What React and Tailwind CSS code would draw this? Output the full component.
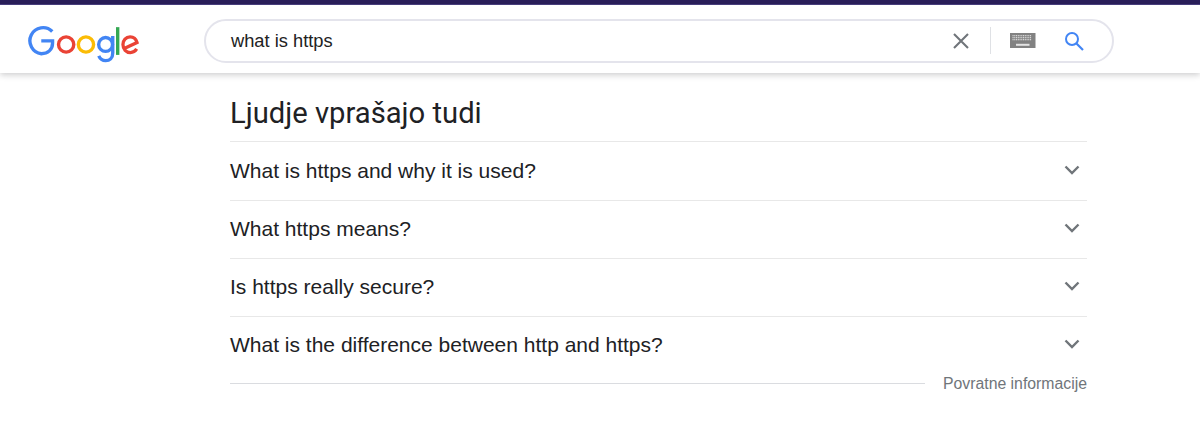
import React from "react";

function GoogleLogo() {
  return (
    <svg width="113" height="41" viewBox="0 0 113 41" fill="none" aria-label="Google">
      <path transform="translate(0 1.2)" d="M25.5 7.2 A13.2 13.2 0 1 0 14.5 29.6 C21 29.6 25.8 25.6 25.8 18.8 L25.8 16.6 L14.4 16.6" stroke="#4285f4" strokeWidth="3.4" />
      <circle cx="39.5" cy="21.5" r="7.7" stroke="#ea4335" strokeWidth="3.4" />
      <circle cx="59.5" cy="21.5" r="7.7" stroke="#fbbc05" strokeWidth="3.4" />
      <circle cx="79.3" cy="21.5" r="7" stroke="#4285f4" strokeWidth="3.4" />
      <path d="M86.5 13 L86.5 30 C86.5 35.5 83.3 37.8 79.4 37.8 C76 37.8 73.6 35.8 72.4 33" stroke="#4285f4" strokeWidth="3.4" />
      <path d="M91.5 4 V32" stroke="#34a853" strokeWidth="3.4" />
      <path d="M97 26 L111 19.5 C110 15.8 107.5 13.8 104 13.8 C99.8 13.8 96.8 17.2 96.8 21.6 C96.8 26.2 100 29.6 104.3 29.6 C107.2 29.6 109.3 28.2 110.7 26" stroke="#ea4335" strokeWidth="3.3" />
    </svg>
  );
}

function Chevron() {
  return (
    <svg width="16" height="10" viewBox="0 0 16 10" fill="none" className="shrink-0">
      <path d="M1.5 1.5 L8 8 L14.5 1.5" stroke="#70757a" strokeWidth="2.4" />
    </svg>
  );
}

function Keyboard() {
  const keys = [];
  for (let r = 0; r < 3; r++) {
    for (let c = 0; c < 11; c++) {
      keys.push(<rect key={`${r}-${c}`} x={2.5 + c * 1.75} y={2 + r * 2} width="1.1" height="1.3" fill="#d6d6d6" />);
    }
  }
  return (
    <svg width="26" height="16" viewBox="0 0 26 16" className="shrink-0">
      <rect width="25.5" height="15" fill="#828282" />
      {keys}
      <rect x="6" y="10.8" width="13.5" height="2" fill="#e4e4e4" />
    </svg>
  );
}

const questions = [
  "What is https and why it is used?",
  "What https means?",
  "Is https really secure?",
  "What is the difference between http and https?",
];

export default function App() {
  return (
    <div className="w-[1200px] h-[436px] overflow-hidden bg-white font-['Liberation_Sans',Arial,sans-serif] text-[#202124]">
      <div className="h-[5px] bg-[#2a1f5a] border-b border-[#4a3f80]" />
      <header className="h-[68px] flex items-center bg-white shadow-[0_2px_6px_rgba(32,33,36,0.22)] relative">
        <div className="ml-[27px] w-[112px] mt-[9px] flex">
          <GoogleLogo />
        </div>
        <div className="ml-[65px] w-[910px] h-[44px] mt-[3px] flex items-center rounded-full border-2 border-[#e4e4ec] bg-white pl-[25px]">
          <span className="flex-1 text-[18.3px] text-[#222]">what is https</span>
          <svg width="16" height="16" viewBox="0 0 16 16" fill="none" className="shrink-0">
            <path d="M1 1 L15 15 M15 1 L1 15" stroke="#70757a" strokeWidth="2.1" />
          </svg>
          <div className="ml-[21px] h-[27px] w-px bg-[#dfe1e5]" />
          <div className="ml-[19px]"><Keyboard /></div>
          <svg width="20" height="20" viewBox="0 0 20 20" fill="none" className="ml-[28px] mr-[28px] shrink-0">
            <circle cx="8" cy="8" r="6" stroke="#4285f4" strokeWidth="2" />
            <path d="M12.5 12.5 L19 19" stroke="#4285f4" strokeWidth="2.2" />
          </svg>
        </div>
      </header>
      <main className="ml-[230px] w-[857px]">
        <h2 className="h-[69px] pt-[14px] flex items-center text-[29.2px] font-['Roboto',sans-serif] font-normal border-b border-[#e8e8e8]">
          Ljudje vprašajo tudi
        </h2>
        {questions.map((q, i) => (
          <div key={q} className={`flex items-center justify-between pr-[7px] ${i === 0 ? "h-[59px] pb-[2px]" : "h-[58px] pb-[4px]"} ${i < 3 ? "border-b border-[#e8e8e8]" : ""}`}>
            <span className="text-[21px] translate-y-[1px]">{q}</span>
            <Chevron />
          </div>
        ))}
        <div className="flex items-center gap-[18px] -mt-[3px]">
          <div className="flex-1 h-px bg-[#dadce0]" />
          <span className="text-[15.8px] text-[#70757a]">Povratne informacije</span>
        </div>
      </main>
    </div>
  );
}
